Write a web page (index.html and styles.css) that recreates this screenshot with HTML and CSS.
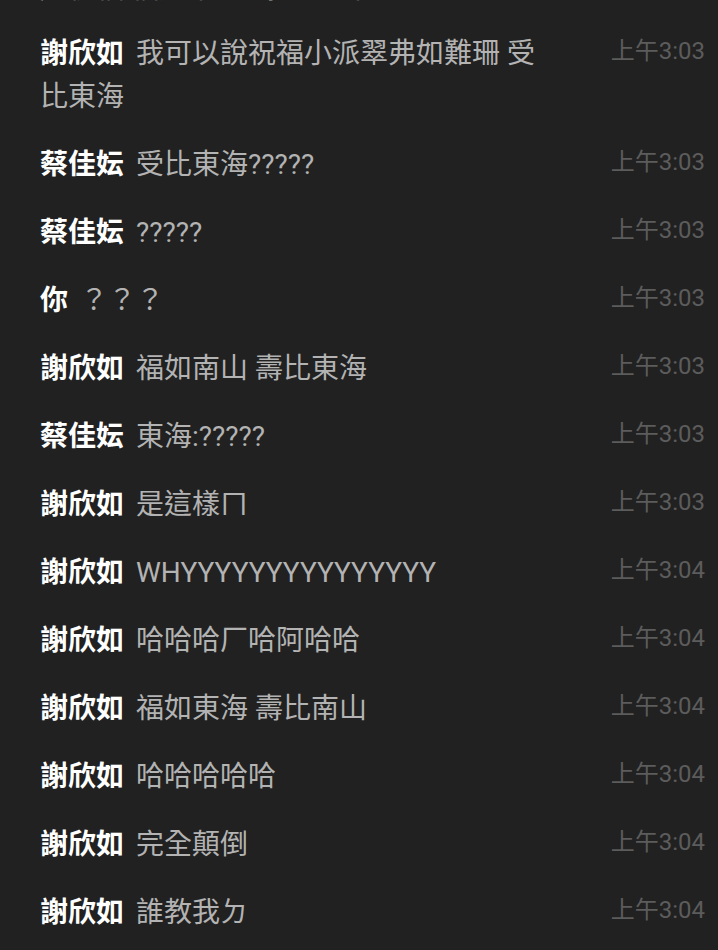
FILE: index.html
```html
<!DOCTYPE html>
<html lang="zh-Hant">
<head>
<meta charset="utf-8">
<title>Chat</title>
<link rel="stylesheet" href="styles.css">
</head>
<body>
<div class="chat">
  <div class="row row-cut">
    <div class="text"><span class="name">蔡佳妘</span><span class="msg">好啦好啦 大家都很會 我也想要一起祝福 福如東海 壽比南山嗎</span></div>
    <div class="time">上午3:02</div>
  </div>
  <div class="row">
    <div class="text"><span class="name">謝欣如</span><span class="msg">我可以說祝福小派翠弗如難珊 受比東海</span></div>
    <div class="time">上午3:03</div>
  </div>
  <div class="row">
    <div class="text"><span class="name">蔡佳妘</span><span class="msg">受比東海?????</span></div>
    <div class="time">上午3:03</div>
  </div>
  <div class="row">
    <div class="text"><span class="name">蔡佳妘</span><span class="msg">?????</span></div>
    <div class="time">上午3:03</div>
  </div>
  <div class="row">
    <div class="text"><span class="name">你</span><span class="msg">？？？</span></div>
    <div class="time">上午3:03</div>
  </div>
  <div class="row">
    <div class="text"><span class="name">謝欣如</span><span class="msg">福如南山 壽比東海</span></div>
    <div class="time">上午3:03</div>
  </div>
  <div class="row">
    <div class="text"><span class="name">蔡佳妘</span><span class="msg">東海:?????</span></div>
    <div class="time">上午3:03</div>
  </div>
  <div class="row">
    <div class="text"><span class="name">謝欣如</span><span class="msg">是這樣ㄇ</span></div>
    <div class="time">上午3:03</div>
  </div>
  <div class="row">
    <div class="text"><span class="name">謝欣如</span><span class="msg">WHYYYYYYYYYYYYYYY</span></div>
    <div class="time">上午3:04</div>
  </div>
  <div class="row">
    <div class="text"><span class="name">謝欣如</span><span class="msg">哈哈哈厂哈阿哈哈</span></div>
    <div class="time">上午3:04</div>
  </div>
  <div class="row">
    <div class="text"><span class="name">謝欣如</span><span class="msg">福如東海 壽比南山</span></div>
    <div class="time">上午3:04</div>
  </div>
  <div class="row">
    <div class="text"><span class="name">謝欣如</span><span class="msg">哈哈哈哈哈</span></div>
    <div class="time">上午3:04</div>
  </div>
  <div class="row">
    <div class="text"><span class="name">謝欣如</span><span class="msg">完全顛倒</span></div>
    <div class="time">上午3:04</div>
  </div>
  <div class="row">
    <div class="text"><span class="name">謝欣如</span><span class="msg">誰教我ㄉ</span></div>
    <div class="time">上午3:04</div>
  </div>
</div>
</body>
</html>
```

FILE: styles.css
```css
html, body {
  margin: 0;
  padding: 0;
  background: #212121;
  height: 100%;
  overflow: hidden;
}

body {
  font-family: Roboto, "Noto Sans CJK TC", sans-serif;
}

.chat {
  margin-top: -88px;
  padding: 0 13px 0 40px;
}

.row {
  display: flex;
  align-items: flex-start;
  padding: 12px 0 13px;
}

.row-cut {
  padding-bottom: 10px;
}

.text {
  flex: 1;
  min-width: 0;
  font-size: 28px;
  line-height: 43px;
  color: #b3b3b3;
}

.name {
  font-weight: 700;
  color: #ffffff;
  margin-right: 12px;
}

.time {
  flex: none;
  margin-left: 60px;
  font-size: 24px;
  line-height: 38px;
  color: #5c5c5c;
  white-space: nowrap;
}
```
